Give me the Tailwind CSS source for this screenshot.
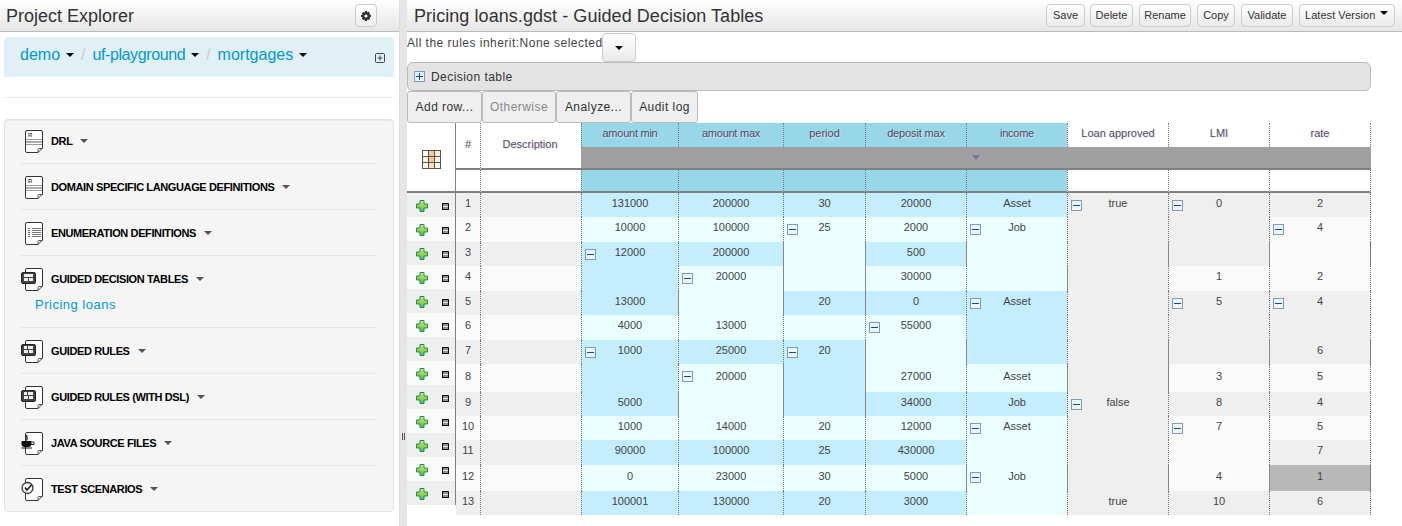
<!DOCTYPE html>
<html lang="en">
<head>
<meta charset="utf-8">
<title>Pricing loans.gdst - Guided Decision Tables</title>
<script src="https://cdn.jsdelivr.net/npm/@tailwindcss/browser@4"></script>
</head>
<body class="font-['Liberation_Sans',Arial,sans-serif] bg-white text-[#333] overflow-hidden">
<svg width="0" height="0" class="absolute">
  <defs>
    <linearGradient id="pg" x1="0" y1="0" x2="0" y2="1"><stop offset="0" stop-color="#e4ea66"/><stop offset="1" stop-color="#5cb544"/></linearGradient>
    <symbol id="doc" viewBox="0 0 24 24"><path d="M6 .5H20a1.500 1.500 0 0 1 1.500 1.500V18L17 22.500H6A1.500 1.500 0 0 1 4.500 21V2A1.500 1.500 0 0 1 6 .5Z" fill="#fff" stroke="#333"/><path d="M17 22.500V19.500A1 1 0 0 1 18 18.500H21.500" fill="none" stroke="#555"/></symbol>
    <symbol id="m" viewBox="0 0 11 11"><rect x=".5" y=".5" width="10" height="10" fill="#eaf5fc" stroke="#8099bd"/><rect x="2" y="5" width="7" height="1" fill="#0a4f94"/></symbol>
    <symbol id="plus" viewBox="0 0 12 12"><path d="M4 .5H8V4H11.500V8H8V11.500H4V8H.5V4H4Z" fill="url(#pg)" stroke="#0a9468"/></symbol>
    <symbol id="del" viewBox="0 0 9 9"><rect width="9" height="9" fill="#fff"/><rect x="1.500" y="1.500" width="6" height="6" fill="#8f8f8f" stroke="#000"/><rect x="2" y="4" width="5" height="1" fill="#e8e8e8"/></symbol>
    <symbol id="rule" viewBox="0 0 24 24"><use href="#doc"/><text x="7" y="7" font-size="6" font-family="Liberation Sans" fill="#555">R</text><rect x="5" y="9" width="16" height="1" fill="#999"/><rect x="5" y="11" width="16" height="2" fill="#aaa"/><rect x="5" y="14" width="16" height="1" fill="#999"/></symbol>
    <symbol id="gdt" viewBox="0 0 24 24"><use href="#doc"/><rect x=".5" y="4.500" width="14" height="11" rx="1.500" fill="#444" stroke="#222"/><rect x="3" y="6" width="9" height="3" fill="#eee"/><rect x="3" y="10" width="4" height="3" fill="#eee"/><rect x="8" y="10" width="4" height="3" fill="#eee"/></symbol>
    <symbol id="grule" viewBox="0 0 24 24"><use href="#doc"/><rect x=".5" y="4.500" width="14" height="11" rx="1.500" fill="#444" stroke="#222"/><rect x="3" y="6" width="3" height="3" fill="#eee"/><rect x="7" y="6" width="5" height="3" fill="#eee"/><rect x="3" y="10" width="4" height="3" fill="#eee"/><rect x="8" y="10" width="4" height="3" fill="#eee"/></symbol>
  </defs>
</svg>

<div class="flex h-[526px] w-[1402px] overflow-hidden">
  <!-- left -->
  <aside class="w-[399px] shrink-0">
    <div class="h-[32px] flex items-center justify-between pl-[6px] pr-[22px] border-b border-[#bbb] bg-gradient-to-b from-white to-[#e6e6e6]">
      <span class="text-[18px] leading-[28px] text-[#333]">Project Explorer</span>
      <button class="w-[22px] h-[23px] flex items-center justify-center rounded-[4px] border border-[#ccc] bg-gradient-to-b from-white to-[#eee]">
        <svg width="10" height="10" viewBox="0 0 10 10"><path d="M4 0H6L6.300 1.400 7.500 .8 9 2.300 8.400 3.600 10 4V6L8.600 6.300 9.200 7.600 7.700 9.100 6.400 8.500 6 10H4L3.700 8.600 2.400 9.200 .9 7.700 1.500 6.400 0 6V4L1.400 3.700 .8 2.400 2.300 .9 3.600 1.500Z" fill="#333"/><circle cx="5" cy="5" r="1.600" fill="#f4f4f4"/></svg>
      </button>
    </div>
    <div class="ml-[4px] mr-[5px] mt-[5px] h-[40px] bg-[#e1f0f6] rounded-t-[4px] pl-[16px] pr-[9px] flex items-start justify-between relative">
      <div class="flex items-center text-[16px] leading-[18px] text-[#0099d3] pt-[9px]">
        <span>demo</span><span class="ml-[6px] w-0 h-0 border-x-[4px] border-x-transparent border-t-[4px] border-t-black"></span>
        <span class="text-[#ccc] ml-[7px] mr-[7px]">/</span>
        <span class="tracking-[-0.4px]">uf-playground</span><span class="ml-[6px] w-0 h-0 border-x-[4px] border-x-transparent border-t-[4px] border-t-black"></span>
        <span class="text-[#ccc] ml-[7px] mr-[7px]">/</span>
        <span>mortgages</span><span class="ml-[6px] w-0 h-0 border-x-[4px] border-x-transparent border-t-[4px] border-t-black"></span>
      </div>
      <svg class="mt-[16px]" width="10" height="10" viewBox="0 0 10 10"><rect x=".5" y=".5" width="9" height="9" rx="1" fill="none" stroke="#444"/><path d="M2.500 5H7.500M5 2.500V7.500" stroke="#444"/></svg>
    </div>
    <div class="ml-[4px] mr-[5px] mt-[20px] border-t border-[#eee]"></div>
    <div class="ml-[4px] mr-[5px] mt-[21px] h-[393px] border border-[#e3e3e3] rounded-[4px] bg-[#f5f5f5] px-[16px] shadow-[inset_0_1px_1px_rgba(0,0,0,0.05)]">
      <div class="h-[44px] pt-[10px] flex items-start border-b border-[#e5e5e5] text-[11px] font-bold text-black tracking-[-0.38px]">
        <svg class="w-[24px] h-[24px] mr-[6px] shrink-0" viewBox="0 0 24 24"><use href="#rule"/></svg>
        <span class="leading-[22px]">DRL</span><span class="ml-[8px] mt-[9px] w-0 h-0 border-x-[4px] border-x-transparent border-t-[4px] border-t-[#555]"></span>
      </div>
      <div class="h-[46px] pt-[12px] flex items-start border-b border-[#e5e5e5] text-[11px] font-bold text-black tracking-[-0.38px]">
        <svg class="w-[24px] h-[24px] mr-[6px] shrink-0" viewBox="0 0 24 24"><use href="#rule"/></svg>
        <span class="leading-[22px]">DOMAIN SPECIFIC LANGUAGE DEFINITIONS</span><span class="ml-[8px] mt-[9px] w-0 h-0 border-x-[4px] border-x-transparent border-t-[4px] border-t-[#555]"></span>
      </div>
      <div class="h-[46px] pt-[12px] flex items-start border-b border-[#e5e5e5] text-[11px] font-bold text-black tracking-[-0.38px]">
        <svg class="w-[24px] h-[24px] mr-[6px] shrink-0" viewBox="0 0 24 24"><use href="#doc"/><path d="M7 6.500H9M7 8.500H9M7 10.500H9M7 12.500H9M7 14.500H9" stroke="#666" stroke-dasharray="2 0"/><path d="M11 6.500H20M11 8.500H20M11 10.500H20M11 12.500H20M11 14.500H20" stroke="#777"/></svg>
        <span class="leading-[22px]">ENUMERATION DEFINITIONS</span><span class="ml-[8px] mt-[9px] w-0 h-0 border-x-[4px] border-x-transparent border-t-[4px] border-t-[#555]"></span>
      </div>
      <div class="h-[72px] pt-[12px] border-b border-[#e5e5e5]">
        <div class="flex items-start text-[11px] font-bold text-black tracking-[-0.38px]">
          <svg class="w-[24px] h-[24px] mr-[6px] shrink-0" viewBox="0 0 24 24"><use href="#gdt"/></svg>
          <span class="leading-[22px]">GUIDED DECISION TABLES</span><span class="ml-[8px] mt-[9px] w-0 h-0 border-x-[4px] border-x-transparent border-t-[4px] border-t-[#555]"></span>
        </div>
        <div class="pl-[14px] mt-[4px] text-[13px] leading-[18px] tracking-[0.5px] text-[#0099d3]">Pricing loans</div>
      </div>
      <div class="h-[46px] pt-[12px] flex items-start border-b border-[#e5e5e5] text-[11px] font-bold text-black tracking-[-0.38px]">
        <svg class="w-[24px] h-[24px] mr-[6px] shrink-0" viewBox="0 0 24 24"><use href="#grule"/></svg>
        <span class="leading-[22px]">GUIDED RULES</span><span class="ml-[8px] mt-[9px] w-0 h-0 border-x-[4px] border-x-transparent border-t-[4px] border-t-[#555]"></span>
      </div>
      <div class="h-[46px] pt-[12px] flex items-start border-b border-[#e5e5e5] text-[11px] font-bold text-black tracking-[-0.38px]">
        <svg class="w-[24px] h-[24px] mr-[6px] shrink-0" viewBox="0 0 24 24"><use href="#grule"/></svg>
        <span class="leading-[22px]">GUIDED RULES (WITH DSL)</span><span class="ml-[8px] mt-[9px] w-0 h-0 border-x-[4px] border-x-transparent border-t-[4px] border-t-[#555]"></span>
      </div>
      <div class="h-[46px] pt-[12px] flex items-start border-b border-[#e5e5e5] text-[11px] font-bold text-black tracking-[-0.38px]">
        <svg class="w-[24px] h-[24px] mr-[6px] shrink-0" viewBox="0 0 24 24"><use href="#doc"/><path d="M.5 9H10.500V12C10.500 14 9 15 7.500 15H3.500C2 15 .5 14 .5 12Z" fill="#111"/><path d="M.5 16H11" stroke="#111"/><path d="M10.500 10H13V12.500H10" fill="none" stroke="#222"/><path d="M6 3C4.500 5 7.500 6 5.500 8.500" fill="none" stroke="#333" stroke-width="1.500"/></svg>
        <span class="leading-[22px]">JAVA SOURCE FILES</span><span class="ml-[8px] mt-[9px] w-0 h-0 border-x-[4px] border-x-transparent border-t-[4px] border-t-[#555]"></span>
      </div>
      <div class="h-[46px] pt-[12px] flex items-start text-[11px] font-bold text-black tracking-[-0.38px]">
        <svg class="w-[24px] h-[24px] mr-[6px] shrink-0" viewBox="0 0 24 24"><use href="#doc"/><circle cx="6.500" cy="10" r="5.500" fill="#f5f5f5" stroke="#333" stroke-width="1.300"/><path d="M4 9.500L6 12L11 6.500" fill="none" stroke="#222" stroke-width="1.600"/></svg>
        <span class="leading-[22px]">TEST SCENARIOS</span><span class="ml-[8px] mt-[9px] w-0 h-0 border-x-[4px] border-x-transparent border-t-[4px] border-t-[#555]"></span>
      </div>
    </div>
  </aside>

  <!-- splitter -->
  <div class="w-[8px] shrink-0 bg-[#e6e6e6] relative border-l border-[#ddd]">
    <span class="absolute left-[2px] top-[433px] w-[3px] h-[7px] border-x border-[#555]"></span>
  </div>

  <!-- right -->
  <main class="flex-1 min-w-0">
    <div class="h-[32px] flex items-center justify-between pl-[7px] pr-[7px] border-b border-[#bbb] bg-gradient-to-b from-white to-[#e6e6e6]">
      <span class="text-[18px] leading-[28px] text-[#333] tracking-[0.06px]">Pricing loans.gdst - Guided Decision Tables</span>
      <div class="flex gap-[6px] text-[11px] text-[#333]">
        <button class="w-[39px] h-[23px] -mr-[1px] rounded-[4px] border border-[#ccc] bg-gradient-to-b from-white to-[#eaeaea]">Save</button>
        <button class="w-[43px] h-[23px] rounded-[4px] border border-[#ccc] bg-gradient-to-b from-white to-[#eaeaea]">Delete</button>
        <button class="w-[52px] h-[23px] rounded-[4px] border border-[#ccc] bg-gradient-to-b from-white to-[#eaeaea]">Rename</button>
        <button class="w-[38px] h-[23px] rounded-[4px] border border-[#ccc] bg-gradient-to-b from-white to-[#eaeaea]">Copy</button>
        <button class="w-[52px] h-[23px] rounded-[4px] border border-[#ccc] bg-gradient-to-b from-white to-[#eaeaea]">Validate</button>
        <button class="w-[96px] h-[23px] pl-[5px] flex items-start gap-[5px] leading-[21px] rounded-[4px] border border-[#ccc] bg-gradient-to-b from-white to-[#eaeaea] tracking-[0.05px]">Latest Version<span class="mt-[6px] w-0 h-0 border-x-[4px] border-x-transparent border-t-[4px] border-t-black"></span></button>
      </div>
    </div>

    <div class="h-[30px] flex items-start text-[12px] text-[#444]">
      <span class="leading-[22px] tracking-[0.48px] w-[195px] whitespace-nowrap">All the rules inherit:None selected</span>
      <button class="w-[34px] h-[29px] mt-[1px] flex items-center justify-center rounded-[4px] border border-[#ccc] bg-gradient-to-b from-white to-[#eaeaea]"><span class="w-0 h-0 border-x-[4px] border-x-transparent border-t-[4px] border-t-black"></span></button>
    </div>

    <div class="w-[964px] h-[29px] flex items-center pl-[6px] gap-[6px] bg-[#e3e3e3] border border-[#bbb] rounded-[6px] text-[12px] text-[#333] tracking-[0.45px]">
      <svg width="11" height="11" viewBox="0 0 11 11"><rect x=".5" y=".5" width="10" height="10" fill="#e6f3fb" stroke="#7f98bb"/><path d="M2 5.500H9M5.500 2V9" stroke="#0a4f94"/></svg>
      <span>Decision table</span>
    </div>

    <div class="flex h-[32px] text-[12px] text-[#333] tracking-[0.45px]">
      <button class="w-[75px] h-[32px] rounded-[3px] border border-[#bbb] bg-[#efefef]">Add row...</button>
      <button class="w-[74px] h-[32px] rounded-[3px] border border-[#bbb] bg-[#efefef] text-[#888]">Otherwise</button>
      <button class="w-[75px] h-[32px] rounded-[3px] border border-[#bbb] bg-[#efefef]">Analyze...</button>
      <button class="w-[67px] h-[32px] rounded-[3px] border border-[#bbb] bg-[#efefef]">Audit log</button>
    </div>

    <div class="flex items-start">
      <!-- row actions -->
      <div class="w-[49px] shrink-0 border-r border-[#808080]">
        <div class="h-[70px] bg-white border-b-2 border-[#808080] flex items-start justify-center pt-[27px]">
          <svg width="19" height="19" viewBox="0 0 19 19"><rect width="19" height="19" fill="#555"/><rect x="1" y="1" width="5" height="5" fill="#fff"/><rect x="7" y="1" width="5" height="5" fill="#f9c890"/><rect x="13" y="1" width="5" height="5" fill="#ffe8d0"/><rect x="1" y="7" width="5" height="5" fill="#fff0e0"/><rect x="7" y="7" width="5" height="5" fill="#fbc78e"/><rect x="13" y="7" width="5" height="5" fill="#fff0e0"/><rect x="1" y="13" width="5" height="5" fill="#fff6ee"/><rect x="7" y="13" width="5" height="5" fill="#fde0c0"/><rect x="13" y="13" width="5" height="5" fill="#fff6ee"/></svg>
        </div>
        <div class="h-[24px] bg-[#efefef] flex items-center pl-[9px] gap-[11px]"><svg class="w-[12px] h-[12px] mt-[2px]"><use href="#plus"/></svg><svg class="w-[9px] h-[9px] ml-[2px] mt-[2px]"><use href="#del"/></svg></div>
        <div class="h-[24px] bg-[#fafafa] flex items-center pl-[9px] gap-[11px]"><svg class="w-[12px] h-[12px] mt-[2px]"><use href="#plus"/></svg><svg class="w-[9px] h-[9px] ml-[2px] mt-[2px]"><use href="#del"/></svg></div>
        <div class="h-[24px] bg-[#efefef] flex items-center pl-[9px] gap-[11px]"><svg class="w-[12px] h-[12px] mt-[2px]"><use href="#plus"/></svg><svg class="w-[9px] h-[9px] ml-[2px] mt-[2px]"><use href="#del"/></svg></div>
        <div class="h-[24px] bg-[#fafafa] flex items-center pl-[9px] gap-[11px]"><svg class="w-[12px] h-[12px] mt-[2px]"><use href="#plus"/></svg><svg class="w-[9px] h-[9px] ml-[2px] mt-[2px]"><use href="#del"/></svg></div>
        <div class="h-[24px] bg-[#efefef] flex items-center pl-[9px] gap-[11px]"><svg class="w-[12px] h-[12px] mt-[2px]"><use href="#plus"/></svg><svg class="w-[9px] h-[9px] ml-[2px] mt-[2px]"><use href="#del"/></svg></div>
        <div class="h-[24px] bg-[#fafafa] flex items-center pl-[9px] gap-[11px]"><svg class="w-[12px] h-[12px] mt-[2px]"><use href="#plus"/></svg><svg class="w-[9px] h-[9px] ml-[2px] mt-[2px]"><use href="#del"/></svg></div>
        <div class="h-[24px] bg-[#efefef] flex items-center pl-[9px] gap-[11px]"><svg class="w-[12px] h-[12px] mt-[2px]"><use href="#plus"/></svg><svg class="w-[9px] h-[9px] ml-[2px] mt-[2px]"><use href="#del"/></svg></div>
        <div class="h-[24px] bg-[#fafafa] flex items-center pl-[9px] gap-[11px]"><svg class="w-[12px] h-[12px] mt-[2px]"><use href="#plus"/></svg><svg class="w-[9px] h-[9px] ml-[2px] mt-[2px]"><use href="#del"/></svg></div>
        <div class="h-[24px] bg-[#efefef] flex items-center pl-[9px] gap-[11px]"><svg class="w-[12px] h-[12px] mt-[2px]"><use href="#plus"/></svg><svg class="w-[9px] h-[9px] ml-[2px] mt-[2px]"><use href="#del"/></svg></div>
        <div class="h-[24px] bg-[#fafafa] flex items-center pl-[9px] gap-[11px]"><svg class="w-[12px] h-[12px] mt-[2px]"><use href="#plus"/></svg><svg class="w-[9px] h-[9px] ml-[2px] mt-[2px]"><use href="#del"/></svg></div>
        <div class="h-[24px] bg-[#efefef] flex items-center pl-[9px] gap-[11px]"><svg class="w-[12px] h-[12px] mt-[2px]"><use href="#plus"/></svg><svg class="w-[9px] h-[9px] ml-[2px] mt-[2px]"><use href="#del"/></svg></div>
        <div class="h-[24px] bg-[#fafafa] flex items-center pl-[9px] gap-[11px]"><svg class="w-[12px] h-[12px] mt-[2px]"><use href="#plus"/></svg><svg class="w-[9px] h-[9px] ml-[2px] mt-[2px]"><use href="#del"/></svg></div>
        <div class="h-[24px] bg-[#efefef] flex items-center pl-[9px] gap-[11px]"><svg class="w-[12px] h-[12px] mt-[2px]"><use href="#plus"/></svg><svg class="w-[9px] h-[9px] ml-[2px] mt-[2px]"><use href="#del"/></svg></div>
      </div>

      <!-- grid -->
      <table class="w-[915px] table-fixed border-separate border-spacing-0 text-[11px] leading-[12px] text-[#444] [&_td]:relative [&_td]:border-l [&_td]:border-dotted [&_td]:border-[#777] [&_td]:text-center [&_td]:align-middle [&_td]:pb-1 [&_td]:p-0 [&_th]:relative [&_th]:border-l [&_th]:[border-left-style:dotted] [&_th]:[border-right-style:dotted] [&_th]:border-[#777] [&_th]:font-normal [&_th]:text-[#504c58] [&_th]:[text-shadow:1px_1px_1px_#e2e2ff]">
        <colgroup><col class="w-[24px]"><col class="w-[101px]"><col class="w-[97px]"><col class="w-[105px]"><col class="w-[82px]"><col class="w-[101px]"><col class="w-[101px]"><col class="w-[101px]"><col class="w-[101px]"><col class="w-[102px]"></colgroup>
        <thead>
          <tr class="h-[24px]">
            <th rowspan="2" class="border-l-0! bg-white border-b-2 border-b-[#808080]!"><span class="relative top-[-2px]">#</span></th>
            <th rowspan="2" class="bg-white border-b-2 border-b-[#808080]!"><span class="relative top-[-2px] -left-[1px]">Description</span></th>
            <th class="bg-[#97d7e7] pb-[4px] tracking-[-0.25px]">amount min</th>
            <th class="bg-[#97d7e7] pb-[4px] tracking-[-0.25px]">amount max</th>
            <th class="bg-[#97d7e7] pb-[4px]">period</th>
            <th class="bg-[#97d7e7] pb-[4px] tracking-[-0.15px]">deposit max</th>
            <th class="bg-[#97d7e7] pb-[4px] tracking-[-0.25px]">income</th>
            <th class="bg-white pb-[4px]">Loan approved</th>
            <th class="bg-white pb-[4px]">LMI</th>
            <th class="bg-white pb-[4px] border-r">rate</th>
          </tr>
          <tr class="h-[23px]">
            <th colspan="8" class="bg-[#a0a0a0] border-l-0! border-b-2 border-b-[#808080]!">
              <span class="absolute left-[391px] top-[8px] w-0 h-0 border-x-[4px] border-x-transparent border-t-[5px] border-t-[#6f7b93]"></span>
            </th>
          </tr>
          <tr class="h-[23px]">
            <th class="border-l-0! border-b-2 border-b-[#808080]! bg-white"></th>
            <th class="bg-white border-b-2 border-b-[#808080]!"></th>
            <th class="bg-[#97d7e7] border-b-2 border-b-[#808080]!"></th>
            <th class="bg-[#97d7e7] border-b-2 border-b-[#808080]!"></th>
            <th class="bg-[#97d7e7] border-b-2 border-b-[#808080]!"></th>
            <th class="bg-[#97d7e7] border-b-2 border-b-[#808080]!"></th>
            <th class="bg-[#97d7e7] border-b-2 border-b-[#808080]!"></th>
            <th class="bg-white border-b-2 border-b-[#808080]!"></th>
            <th class="bg-white border-b-2 border-b-[#808080]!"></th>
            <th class="bg-white border-b-2 border-b-[#808080]! border-r"></th>
          </tr>
        </thead>
        <tbody>
          <tr class="h-[24px]">
            <td class="border-l-0! bg-[#efefef]">1</td><td class="bg-[#efefef]"></td>
            <td class="bg-[#c4eeff]">131000</td><td class="bg-[#c4eeff]">200000</td><td class="bg-[#c4eeff]">30</td><td class="bg-[#c4eeff]">20000</td><td class="bg-[#c4eeff]">Asset</td>
            <td class="bg-[#efefef]"><svg class="absolute left-[3px] top-[7px] w-[11px] h-[11px]"><use href="#m"/></svg>true</td>
            <td class="bg-[#efefef]"><svg class="absolute left-[3px] top-[7px] w-[11px] h-[11px]"><use href="#m"/></svg>0</td>
            <td class="bg-[#efefef] border-r">2</td>
          </tr>
          <tr class="h-[25px] [&>td]:pb-[5px]!">
            <td class="border-l-0! bg-[#fafafa]">2</td><td class="bg-[#fafafa]"></td>
            <td class="bg-[#ebffff]">10000</td><td class="bg-[#ebffff]">100000</td>
            <td class="bg-[#ebffff]"><svg class="absolute left-[3px] top-[7px] w-[11px] h-[11px]"><use href="#m"/></svg>25</td>
            <td class="bg-[#ebffff]">2000</td>
            <td class="bg-[#ebffff]"><svg class="absolute left-[3px] top-[7px] w-[11px] h-[11px]"><use href="#m"/></svg>Job</td>
            <td class="bg-[#efefef]"></td><td class="bg-[#efefef]"></td>
            <td class="bg-[#fafafa] border-r"><svg class="absolute left-[3px] top-[7px] w-[11px] h-[11px]"><use href="#m"/></svg>4</td>
          </tr>
          <tr class="h-[24px]">
            <td class="border-l-0! bg-[#efefef]">3</td><td class="bg-[#efefef]"></td>
            <td class="bg-[#c4eeff]"><svg class="absolute left-[3px] top-[7px] w-[11px] h-[11px]"><use href="#m"/></svg>12000</td>
            <td class="bg-[#c4eeff]">200000</td>
            <td class="bg-[#ebffff] border-solid! border-[#888]!"></td>
            <td class="bg-[#c4eeff] border-solid! border-[#888]!">500</td>
            <td class="bg-[#ebffff] border-solid! border-[#888]!"></td>
            <td class="bg-[#efefef]"></td>
            <td class="bg-[#efefef] border-solid! border-[#888]!"></td>
            <td class="bg-[#fafafa] border-solid! border-l-[#888]! border-r"></td>
          </tr>
          <tr class="h-[25px] [&>td]:pb-[5px]!">
            <td class="border-l-0! bg-[#fafafa]">4</td><td class="bg-[#fafafa]"></td>
            <td class="bg-[#c4eeff]"></td>
            <td class="bg-[#ebffff]"><svg class="absolute left-[3px] top-[7px] w-[11px] h-[11px]"><use href="#m"/></svg>20000</td>
            <td class="bg-[#ebffff] border-solid! border-[#888]!"></td>
            <td class="bg-[#ebffff] border-solid! border-[#888]!">30000</td>
            <td class="bg-[#ebffff]"></td>
            <td class="bg-[#efefef] border-solid! border-[#888]!"></td>
            <td class="bg-[#fafafa]">1</td>
            <td class="bg-[#fafafa] border-r">2</td>
          </tr>
          <tr class="h-[24px]">
            <td class="border-l-0! bg-[#efefef]">5</td><td class="bg-[#efefef]"></td>
            <td class="bg-[#c4eeff]">13000</td>
            <td class="bg-[#ebffff] border-solid! border-[#888]!"></td>
            <td class="bg-[#c4eeff] border-solid! border-[#888]!">20</td>
            <td class="bg-[#c4eeff] border-solid! border-[#888]!">0</td>
            <td class="bg-[#c4eeff]"><svg class="absolute left-[3px] top-[7px] w-[11px] h-[11px]"><use href="#m"/></svg>Asset</td>
            <td class="bg-[#efefef]"></td>
            <td class="bg-[#efefef]"><svg class="absolute left-[3px] top-[7px] w-[11px] h-[11px]"><use href="#m"/></svg>5</td>
            <td class="bg-[#efefef] border-r"><svg class="absolute left-[3px] top-[7px] w-[11px] h-[11px]"><use href="#m"/></svg>4</td>
          </tr>
          <tr class="h-[25px] [&>td]:pb-[5px]!">
            <td class="border-l-0! bg-[#fafafa]">6</td><td class="bg-[#fafafa]"></td>
            <td class="bg-[#ebffff]">4000</td><td class="bg-[#ebffff]">13000</td><td class="bg-[#ebffff]"></td>
            <td class="bg-[#ebffff]"><svg class="absolute left-[3px] top-[7px] w-[11px] h-[11px]"><use href="#m"/></svg>55000</td>
            <td class="bg-[#c4eeff]"></td>
            <td class="bg-[#efefef]"></td><td class="bg-[#efefef]"></td><td class="bg-[#efefef] border-r"></td>
          </tr>
          <tr class="h-[24px]">
            <td class="border-l-0! bg-[#efefef]">7</td><td class="bg-[#efefef]"></td>
            <td class="bg-[#c4eeff]"><svg class="absolute left-[3px] top-[7px] w-[11px] h-[11px]"><use href="#m"/></svg>1000</td>
            <td class="bg-[#c4eeff]">25000</td>
            <td class="bg-[#c4eeff]"><svg class="absolute left-[3px] top-[7px] w-[11px] h-[11px]"><use href="#m"/></svg>20</td>
            <td class="bg-[#ebffff] border-solid! border-[#888]!"></td>
            <td class="bg-[#c4eeff] border-solid! border-[#888]!"></td>
            <td class="bg-[#efefef]"></td>
            <td class="bg-[#efefef] border-solid! border-[#888]!"></td>
            <td class="bg-[#efefef] border-solid! border-l-[#888]! border-r">6</td>
          </tr>
          <tr class="h-[28px]">
            <td class="border-l-0! bg-[#fafafa]">8</td><td class="bg-[#fafafa]"></td>
            <td class="bg-[#c4eeff]"></td>
            <td class="bg-[#ebffff]"><svg class="absolute left-[3px] top-[7px] w-[11px] h-[11px]"><use href="#m"/></svg>20000</td>
            <td class="bg-[#c4eeff] border-solid! border-[#888]!"></td>
            <td class="bg-[#ebffff] border-solid! border-[#888]!">27000</td>
            <td class="bg-[#ebffff]">Asset</td>
            <td class="bg-[#efefef] border-solid! border-[#888]!"></td>
            <td class="bg-[#fafafa] border-solid! border-[#888]!">3</td>
            <td class="bg-[#fafafa] border-r">5</td>
          </tr>
          <tr class="h-[24px]">
            <td class="border-l-0! bg-[#efefef]">9</td><td class="bg-[#efefef]"></td>
            <td class="bg-[#c4eeff]">5000</td>
            <td class="bg-[#ebffff] border-solid! border-[#888]!"></td>
            <td class="bg-[#c4eeff] border-solid! border-[#888]!"></td>
            <td class="bg-[#c4eeff] border-solid! border-[#888]!">34000</td>
            <td class="bg-[#c4eeff]">Job</td>
            <td class="bg-[#efefef]"><svg class="absolute left-[3px] top-[7px] w-[11px] h-[11px]"><use href="#m"/></svg>false</td>
            <td class="bg-[#efefef]">8</td>
            <td class="bg-[#efefef] border-r">4</td>
          </tr>
          <tr class="h-[24px]">
            <td class="border-l-0! bg-[#fafafa]">10</td><td class="bg-[#fafafa]"></td>
            <td class="bg-[#ebffff]">1000</td><td class="bg-[#ebffff]">14000</td><td class="bg-[#ebffff]">20</td><td class="bg-[#ebffff]">12000</td>
            <td class="bg-[#ebffff]"><svg class="absolute left-[3px] top-[7px] w-[11px] h-[11px]"><use href="#m"/></svg>Asset</td>
            <td class="bg-[#efefef]"></td>
            <td class="bg-[#fafafa]"><svg class="absolute left-[3px] top-[7px] w-[11px] h-[11px]"><use href="#m"/></svg>7</td>
            <td class="bg-[#fafafa] border-r">5</td>
          </tr>
          <tr class="h-[25px] [&>td]:pb-[5px]!">
            <td class="border-l-0! bg-[#efefef]">11</td><td class="bg-[#efefef]"></td>
            <td class="bg-[#c4eeff]">90000</td><td class="bg-[#c4eeff]">100000</td><td class="bg-[#c4eeff]">25</td><td class="bg-[#c4eeff]">430000</td>
            <td class="bg-[#ebffff]"></td>
            <td class="bg-[#efefef]"></td>
            <td class="bg-[#fafafa]"></td>
            <td class="bg-[#efefef] border-r">7</td>
          </tr>
          <tr class="h-[26px]">
            <td class="border-l-0! bg-[#fafafa]">12</td><td class="bg-[#fafafa]"></td>
            <td class="bg-[#ebffff]">0</td><td class="bg-[#ebffff]">23000</td><td class="bg-[#ebffff]">30</td><td class="bg-[#ebffff]">5000</td>
            <td class="bg-[#ebffff] border-solid! border-[#888]!"><svg class="absolute left-[3px] top-[7px] w-[11px] h-[11px]"><use href="#m"/></svg>Job</td>
            <td class="bg-[#efefef] border-solid! border-[#888]!"></td>
            <td class="bg-[#fafafa] border-solid! border-[#888]!">4</td>
            <td class="bg-[#b8b8b8] border-solid! border-l-[#888]! border-r">1</td>
          </tr>
          <tr class="h-[24px]">
            <td class="border-l-0! bg-[#efefef]">13</td><td class="bg-[#efefef]"></td>
            <td class="bg-[#c4eeff]">100001</td><td class="bg-[#c4eeff]">130000</td><td class="bg-[#c4eeff]">20</td><td class="bg-[#c4eeff]">3000</td>
            <td class="bg-[#ebffff]"></td>
            <td class="bg-[#efefef]">true</td>
            <td class="bg-[#efefef]">10</td>
            <td class="bg-[#efefef] border-r">6</td>
          </tr>
        </tbody>
      </table>
    </div>
  </main>
</div>
</body>
</html>
